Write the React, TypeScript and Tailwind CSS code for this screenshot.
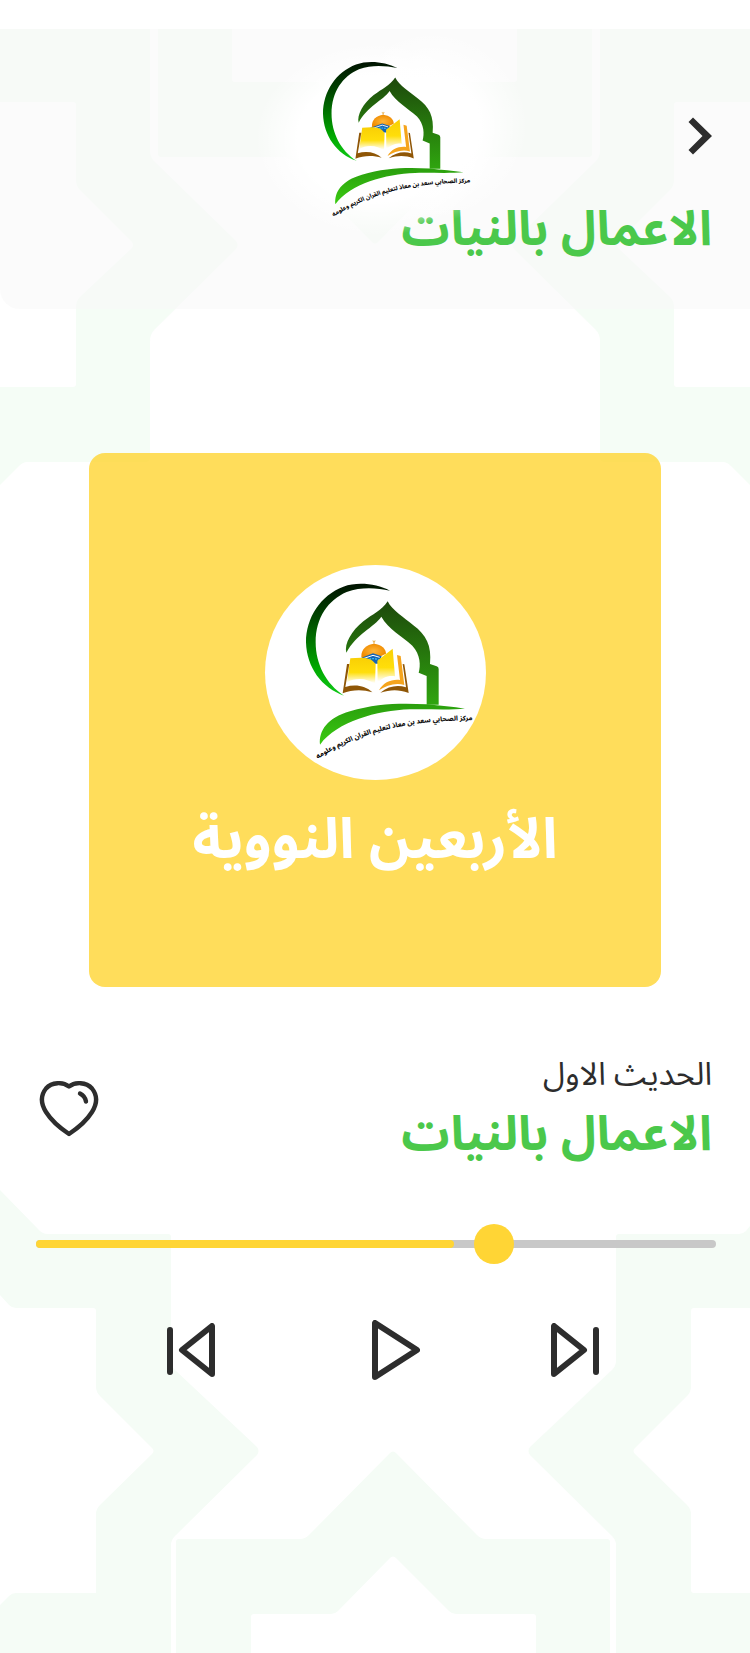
import { useId, useState } from "react";

function Emblem({ className }: { className: string }) {
  const id = useId();
  return (
    <svg viewBox="168 100 492 522" className={className} overflow="visible" role="img" aria-label="شعار المركز">
      <defs>
        <linearGradient id={`${id}-moon`} x1="0" y1="0" x2="0" y2="1">
          <stop offset="0" stopColor="#001200" />
          <stop offset="0.3" stopColor="#004600" />
          <stop offset="0.75" stopColor="#00a800" />
          <stop offset="1" stopColor="#10c818" />
        </linearGradient>
        <linearGradient id={`${id}-arch`} x1="0" y1="0" x2="0" y2="1">
          <stop offset="0" stopColor="#1d480b" />
          <stop offset="1" stopColor="#2fa50f" />
        </linearGradient>
        <linearGradient id={`${id}-hill`} x1="0" y1="0" x2="0" y2="1">
          <stop offset="0" stopColor="#2a9e0d" />
          <stop offset="1" stopColor="#3acb12" />
        </linearGradient>
        <linearGradient id={`${id}-page`} x1="0" y1="0" x2="0" y2="1">
          <stop offset="0" stopColor="#f9cf05" />
          <stop offset="0.55" stopColor="#ffde0a" />
          <stop offset="0.95" stopColor="#ffffff" />
        </linearGradient>
        <radialGradient id={`${id}-dome`}>
          <stop offset="0" stopColor="#ffb73a" />
          <stop offset="1" stopColor="#f08c00" />
        </radialGradient>
        <path id={`${id}-line`} d="M200 627 C310 555 450 508 672 509" />
      </defs>
      <path fill={`url(#${id}-moon)`} d="M420 120 C380 100 325 92 280 108 C212 134 168 200 168 275 C170 350 215 412 282 435 C228 400 197 340 197 275 C197 200 235 148 290 124 C335 108 380 112 420 120Z" />
      <path fill={`url(#${id}-arch)`} d="M413 152 C427 180 462 200 490 224 C528 252 546 285 540 340 L560 347 Q566 349 566 355 L566 462 L530 462 L530 376 L506 366 C512 345 512 312 487 285 C457 257 415 235 394 198 C372 230 318 250 289 306 C282 280 305 240 340 212 C368 190 395 180 413 152Z" />
      <path fill={`url(#${id}-hill)`} d="M210 582 C206 540 232 502 300 482 C380 457 460 457 530 461 C570 466 610 468 645 474 C600 478 540 475 480 476 C380 480 262 512 210 582Z" />
      <g transform="translate(255 255)">
        <path d="M117 14V26M113 15 L117 20 L121 15" stroke="#e0981a" strokeWidth="2" fill="none" />
        <path fill={`url(#${id}-dome)`} d="M79 63 C78 41 95 26 117 24 C140 26 153 40 153 54 L125 68 L82 68Z" />
        <path fill="#1464b4" d="M72 69 L114 53 L140 62 L130 84 L104 84Z" />
        <path fill="none" stroke="#ffffff" strokeWidth="3" d="M82 70 L114 59 L134 65" />
        <path fill="none" stroke="#39b9e8" strokeWidth="4" strokeDasharray="6 3" d="M94 74 Q114 64 132 73" />
        <path fill={`url(#${id}-page)`} d="M46 68 C72 67 106 60 122 86 L120 146 C100 128 62 124 36 140Z" />
        <path fill={`url(#${id}-page)`} d="M127 75 L173 39 L180 122 C160 118 142 126 128 142Z" />
        <path fill="#f5a41c" d="M186 58 L197 61 L208 148 C180 140 155 150 132 164 C145 140 170 130 195 133Z" />
        <path fill="#8f5606" d="M36 85 L43 85 L31 154 C60 145 92 150 112 170 C82 160 50 162 23 173Z" />
        <path fill="#8f5606" d="M203 85 L208 86 L221 172 C190 160 165 162 136 171 C160 151 188 147 213 155Z" />
      </g>
      <text direction="rtl" textAnchor="middle" fontSize="20" fontWeight="800" fill="#0a0a0a">
        <textPath href={`#${id}-line`} startOffset="50%">مركز الصحابي سعد بن معاذ لتعليم القران الكريم وعلومه</textPath>
      </text>
    </svg>
  );
}

function TopPattern() {
  return (
    <svg viewBox="0 29 750 460" className="pointer-events-none absolute inset-x-0 top-[29px] w-full" aria-hidden="true" fill="#f5fdf6">
      <path d="M0 29H150V150Q150 157 154 161L236 241Q239 245 236 249L155 329Q150 334 150 341V458Q150 462 146 462H27Q23 462 19 466L0 485V387H73Q76 387 76 384V307Q76 301 80 297L132 248Q134 245 132 242L80 190Q76 186 76 180V105Q76 102 73 102H0Z" />
      <path d="M750 29H600V150Q600 157 596 161L514 241Q511 245 514 249L595 329Q600 334 600 341V458Q600 462 604 462H723Q727 462 731 466L750 485V387H677Q674 387 674 384V307Q674 301 670 297L618 248Q616 245 618 242L670 190Q674 186 674 180V105Q674 102 677 102H750Z" />
      <path fillRule="evenodd" d="M158 29H232V79Q232 82 235 82H317L375 140L433 82H514Q517 82 517 79V29H592V154Q592 157 589 157H466Q462 157 459 160L378 242Q375 245 372 242L291 160Q288 157 284 157H161Q158 157 158 154Z" />
    </svg>
  );
}

function BottomPattern() {
  return (
    <svg viewBox="0 1190 750 463" className="pointer-events-none absolute inset-x-0 bottom-0 w-full" aria-hidden="true" fill="#f5fcf6">
      <path d="M0 1190L38 1229Q42 1234 48 1234H168Q171 1234 171 1237V1361Q171 1366 175 1370L257 1447Q260 1451 257 1455L175 1536Q171 1540 171 1545V1653H0V1605L9 1596Q12 1593 16 1593H96V1514Q96 1509 100 1505L152 1454Q155 1451 152 1448L100 1396Q96 1392 96 1387V1311Q96 1308 93 1308H16Q12 1308 9 1305L0 1295Z" />
      <path d="M750 1226L746 1231Q743 1234 739 1234H619Q616 1234 616 1237V1361Q616 1366 612 1370L530 1447Q527 1451 530 1455L612 1536Q616 1540 616 1545V1653H750V1593H694Q691 1593 691 1590V1514Q691 1509 687 1505L635 1454Q632 1451 635 1448L687 1396Q691 1392 691 1387V1311Q691 1308 694 1308H750Z" />
      <path d="M176 1653V1542Q176 1539 179 1539H300Q305 1539 309 1535L390 1453Q393 1450 396 1453L477 1535Q481 1539 486 1539H607Q610 1539 610 1542V1653H536V1617Q536 1614 533 1614H456Q452 1614 449 1611L396 1558Q393 1555 390 1558L338 1611Q335 1614 331 1614H254Q251 1614 251 1617V1653Z" />
    </svg>
  );
}

const line = {
  fill: "none",
  stroke: "currentColor",
  strokeLinecap: "round",
  strokeLinejoin: "round",
} as const;

export default function App() {
  const [position, setPosition] = useState(684);
  const [liked, setLiked] = useState(false);
  const [playing, setPlaying] = useState(false);

  return (
    <main
      dir="rtl"
      lang="ar"
      className="relative min-h-screen overflow-hidden bg-white pt-[29px] font-['Noto_Sans_Arabic','DejaVu_Sans',sans-serif] text-[#2d2d2d]"
    >
      <TopPattern />
      <BottomPattern />

      <header className="relative h-[280px] rounded-bl-[20px] bg-[#f9f9f9]/60 px-[38px] pt-[33px]">
        <div className="pointer-events-none relative z-10 grid grid-cols-3 items-start">
          <button type="button" aria-label="رجوع" className="pointer-events-auto flex h-[148px] items-center justify-self-start">
            <svg width="24" height="38" viewBox="0 0 24 38" fill="#2d2d2d" aria-hidden="true">
              <path d="M5 0.5L24 19L5 37.5L0.5 33L14.5 19L0.5 5Z" />
            </svg>
          </button>
          <div className="relative flex justify-center justify-self-center">
            <div className="absolute -inset-x-12 -top-5 -bottom-5 bg-[radial-gradient(closest-side,#fff_65%,transparent)]" />
            <div className="absolute -top-8 -right-20 size-48 bg-[radial-gradient(closest-side,#fff_50%,transparent)]" />
            <Emblem className="relative left-5 h-[154px] w-[145px]" />
          </div>
        </div>
        <h1 className="-mt-[18px] text-[48px] leading-[64px] font-bold text-[#4bc84b]">الاعمال بالنيات</h1>
      </header>

      <section className="relative mx-auto mt-36 flex h-[534px] w-full max-w-[572px] flex-col items-center rounded-2xl bg-[#ffd532]/80 pt-28">
        <div className="flex h-[215px] w-[221px] items-center justify-center rounded-[50%] bg-white pb-1 pl-[26px]">
          <Emblem className="h-[174px] w-[164px]" />
        </div>
        <h2 className="mt-5 text-[56px] leading-[80px] font-bold text-white">الأربعين النووية</h2>
      </section>

      <section className="relative mt-16 flex items-center justify-between px-[38px]">
        <div className="flex flex-col gap-1">
          <p className="text-[32px] leading-[48px]">الحديث الاول</p>
          <p className="text-[48px] leading-[64px] font-bold text-[#4bc84b]">الاعمال بالنيات</p>
        </div>
        <button type="button" aria-label="إضافة إلى المفضلة" aria-pressed={liked} onClick={() => setLiked(!liked)}>
          <svg width="62" height="56" viewBox="-2 0 62 56" {...line} strokeWidth="4.4" aria-hidden="true">
            <path d="M29 5.5C23 1 12 0.5 6 7.5C0 15 1 23 6 31C11 39 20 47 29 53C38 47 47 39 52 31C57 23 58 15 52 7.5C46 0.5 35 1 29 5.5Z" fill={liked ? "#ffd535" : "none"} />
            <path d="M40 12.5Q45 15 46 20.5" />
          </svg>
        </button>
      </section>

      <div dir="ltr" className="relative mr-[34px] ml-9 mt-[57px] flex h-10 items-center">
        <div className="h-2 w-full rounded-full bg-[#c8c8c8]">
          <div className="h-2 w-[61.5%] rounded-full bg-[#ffd535]" />
        </div>
        <input
          type="range"
          aria-label="موضع التشغيل"
          min={0}
          max={1000}
          value={position}
          onChange={(e) => setPosition(Number(e.target.value))}
          className="absolute inset-0 h-10 w-full cursor-pointer appearance-none bg-transparent [&::-webkit-slider-thumb]:size-10 [&::-webkit-slider-thumb]:appearance-none [&::-webkit-slider-thumb]:rounded-full [&::-webkit-slider-thumb]:bg-[#ffd535]"
        />
      </div>

      <div dir="ltr" className="relative mt-14 flex items-center justify-center pl-4">
        <button type="button" aria-label="السابق">
          <svg width="48" height="54" viewBox="0 0 48 54" {...line} strokeWidth="6" aria-hidden="true">
            <path d="M3 7V49M45 3V51L15 27Z" />
          </svg>
        </button>
        <button type="button" aria-label="تشغيل" aria-pressed={playing} onClick={() => setPlaying(!playing)} className="mr-[131px] ml-[157px]">
          <svg width="48" height="60" viewBox="0 0 48 60" {...line} strokeWidth="6" aria-hidden="true">
            <path d="M3 3V57L45 30Z" />
          </svg>
        </button>
        <button type="button" aria-label="التالي">
          <svg width="48" height="54" viewBox="0 0 48 54" {...line} strokeWidth="6" aria-hidden="true">
            <path d="M45 7V49M3 3V51L33 27Z" />
          </svg>
        </button>
      </div>
    </main>
  );
}
